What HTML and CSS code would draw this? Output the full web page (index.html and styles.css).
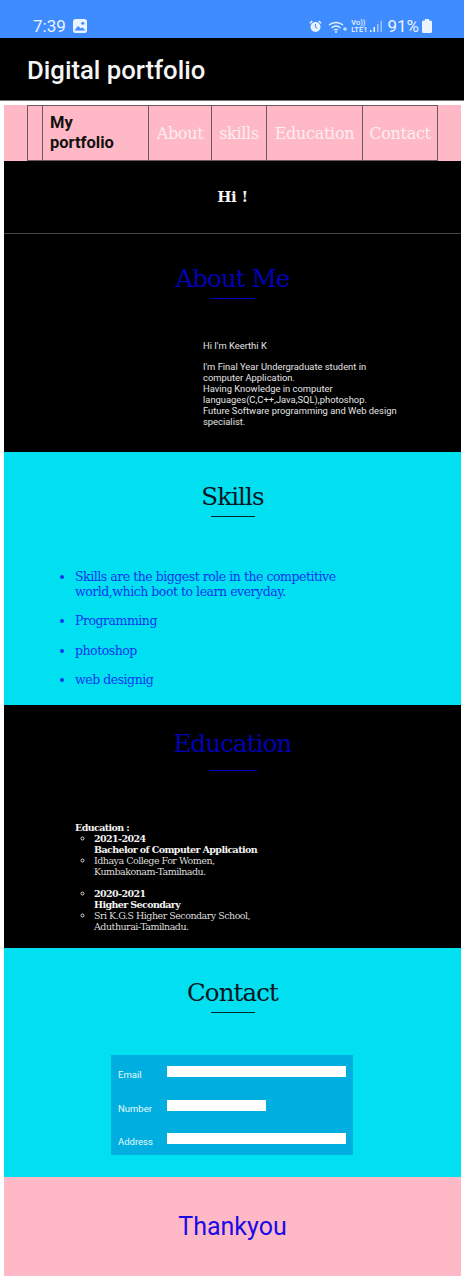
FILE: index.html
```html
<!DOCTYPE html>
<html lang="en">
<head>
    <meta charset="UTF-8">
    <meta name="viewport" content="width=device-width, initial-scale=1.0">
    <title>Digital portfolio</title>
    <link rel="stylesheet" href="styles.css">
</head>
<body>
    <div class="status">
        <span class="time">7:39</span>
        <svg class="pic" width="14" height="14" viewBox="0 0 14 14"><rect width="14" height="14" rx="2.5" fill="#eaf3ff"/><circle cx="9.8" cy="4.2" r="1.5" fill="#3f8cff"/><path d="M1.5 11.5l3.5-4.5 2.8 2.6 1.6-1.4 3 3.3z" fill="#3f8cff"/></svg>
        <span class="status-right">
            <svg width="13" height="13" viewBox="0 0 13 13"><path d="M1 3.2L3.2 1M12 3.2L9.8 1" stroke="#eaf3ff" stroke-width="1.6"/><circle cx="6.5" cy="7" r="5" fill="#eaf3ff"/><path d="M6.5 4v3.2l2 1" stroke="#3f8cff" fill="none"/></svg>
            <svg class="wifi" width="20" height="13" viewBox="0 0 20 13"><path d="M1 5a11 11 0 0 1 14 0M3.5 7.700a7.500 7.500 0 0 1 9 0M6 10a4 4 0 0 1 4 0" stroke="#eaf3ff" stroke-width="1.3" fill="none"/><circle cx="8" cy="12" r="1" fill="#eaf3ff"/><path d="M15 9h4M17 7v4" stroke="#eaf3ff"/></svg>
            <span class="volte">Vo))<br>LTE1</span>
            <svg class="bars" width="13" height="13" viewBox="0 0 13 13"><rect x="0" y="10" width="1.500" height="2" fill="#eaf3ff"/><rect x="3.500" y="7" width="1.500" height="5" fill="#eaf3ff"/><rect x="7" y="4" width="1.500" height="8" fill="#9cc3ff"/><rect x="10.500" y="1" width="1.500" height="11" fill="#9cc3ff"/></svg>
            <span class="pct">91%</span>
            <svg width="10" height="14" viewBox="0 0 10 14"><path d="M3 0h4v1.500h1.500a1.500 1.500 0 0 1 1.500 1.500v9.500a1.500 1.500 0 0 1-1.500 1.500h-7a1.500 1.500 0 0 1-1.500-1.500v-9.500a1.500 1.500 0 0 1 1.500-1.500h1.500z" fill="#eaf3ff"/></svg>
        </span>
    </div>
    <div class="appbar">Digital portfolio</div>

    <div class="page">
        <nav class="nav">
            <div class="menu">
                <div class="cell cell-blank"></div>
                <div class="cell cell-brand">My portfolio</div>
                <div class="cell cell-about">About</div>
                <div class="cell cell-skills">skills</div>
                <div class="cell cell-edu">Education</div>
                <div class="cell cell-contact">Contact</div>
            </div>
        </nav>

        <section class="hi">Hi !</section>

        <section class="about">
            <h2 class="title title-blue">About Me</h2>
            <div class="rule rule-blue"></div>
            <div class="about-text">
                <p>Hi I'm Keerthi K</p>
                <p>I'm Final Year Undergraduate student in computer Application.<br>
                Having Knowledge in computer languages(C,C++,Java,SQL),photoshop.<br>
                Future Software programming and Web design specialist.</p>
            </div>
        </section>

        <section class="skills">
            <h2 class="title">Skills</h2>
            <div class="rule"></div>
            <ul class="skill-list">
                <li>Skills are the biggest role in the competitive world,which boot to learn everyday.</li>
                <li>Programming</li>
                <li>photoshop</li>
                <li>web designig</li>
            </ul>
        </section>

        <section class="education">
            <h2 class="title title-blue">Education</h2>
            <div class="rule rule-blue rule-wide"></div>
            <div class="edu-text">
                <b>Education :</b>
                <ul>
                    <li><b>2021-2024<br>Bachelor of Computer Application</b></li>
                    <li>Idhaya College For Women,<br>Kumbakonam-Tamilnadu.</li>
                </ul>
                <ul class="edu-second">
                    <li><b>2020-2021<br>Higher Secondary</b></li>
                    <li>Sri K.G.S Higher Secondary School,<br>Aduthurai-Tamilnadu.</li>
                </ul>
            </div>
        </section>

        <section class="contact">
            <h2 class="title">Contact</h2>
            <div class="rule"></div>
            <form class="form">
                <div class="row"><label>Email</label><span class="field"></span></div>
                <div class="row"><label>Number</label><span class="field field-short"></span></div>
                <div class="row"><label>Address</label><span class="field"></span></div>
            </form>
        </section>

        <section class="thanks">Thankyou</section>
    </div>
</body>
</html>
```

FILE: styles.css
```css
body{
    margin:0;
    background:#fff;
    font-family:"Roboto",sans-serif;
}
.status{
    height:38px;
    background:#3f8cff;
    color:#eaf3ff;
    display:flex;
    align-items:center;
    padding:14px 32px 0 33px;
    box-sizing:border-box;
}
.time{
    font-size:17px;
    margin-right:7px;
}
.status-right{
    margin-left:auto;
    display:flex;
    align-items:center;
    gap:3px;
}
.wifi{
    margin-left:3px;
}
.volte{
    font-size:7.5px;
    line-height:7px;
    font-weight:500;
}
.pct{
    font-size:17px;
    margin-left:1px;
}
.appbar{
    height:62px;
    background:#000;
    color:#f5f5f5;
    font-size:25.7px;
    font-weight:500;
    line-height:65px;
    padding-left:27px;
    border-bottom:1px solid #777;
}
.page{
    margin:4px 3px 0 4px;
    font-family:"DejaVu Serif",serif;
}
.nav{
    height:56px;
    background:#ffb9c6;
    padding-left:23px;
}
.menu{
    display:flex;
    width:411px;
    height:56px;
    box-sizing:border-box;
    border:1px solid #6a5a5e;
}
.cell{
    border-right:1px solid #6a5a5e;
    box-sizing:border-box;
    color:#fdeef1;
    font-size:16px;
    letter-spacing:-0.3px;
    display:flex;
    align-items:center;
    justify-content:center;
}
.cell-blank{width:15px;}
.cell-brand{
    width:106px;
    color:#111;
    font-family:"Roboto",sans-serif;
    font-weight:700;
    font-size:16.5px;
    letter-spacing:0;
    line-height:20px;
    justify-content:flex-start;
    padding:0 30px 0 7px;
}
.cell-about{width:63px;}
.cell-skills{width:55px;}
.cell-edu{width:96px;}
.cell-contact{width:74px;border-right:0;}
.hi{
    height:73px;
    box-sizing:border-box;
    background:#000;
    color:#f5f5f5;
    font-weight:700;
    font-size:15px;
    letter-spacing:-0.3px;
    text-align:center;
    line-height:72px;
    border-bottom:1px solid #444;
}
.title{
    margin:0;
    font-weight:400;
    font-size:24.5px;
    letter-spacing:-0.9px;
    line-height:34px;
    text-align:center;
    color:#0a1520;
}
.title-blue{
    color:#0202b4;
}
.rule{
    width:44px;
    height:1px;
    margin:2px auto 0;
    background:#0a2530;
}
.rule-blue{
    background:#0000d0;
}
.rule-wide{
    width:48px;
    margin-top:9px;
}
.about{
    height:218px;
    box-sizing:border-box;
    background:#000;
    padding-top:28px;
}
.about-text{
    margin:41px 60px 0 199px;
    font-family:"Roboto",sans-serif;
    font-size:9.4px;
    line-height:11px;
    color:#e4e4e4;
}
.about-text p{
    margin:0 0 10px;
}
.skills{
    height:253px;
    box-sizing:border-box;
    background:#00e0f0;
    padding-top:28px;
}
.skill-list{
    margin:53px 100px 0 0;
    padding-left:71px;
    color:#0d36f0;
    font-size:12.5px;
    letter-spacing:-0.47px;
    line-height:14.5px;
}
.skill-list li{
    margin-bottom:15px;
}
.education{
    height:243px;
    box-sizing:border-box;
    background:#000;
    padding-top:22px;
}
.edu-text{
    margin:51px 0 0 71px;
    color:#dcdcdc;
    font-size:9.5px;
    letter-spacing:-0.5px;
    line-height:11px;
}
.edu-text b{
    color:#f4f4f4;
    letter-spacing:-0.6px;
}
.edu-text ul{
    margin:0;
    padding-left:19px;
    list-style:circle;
}
.edu-second{
    padding-top:11px;
}
.contact{
    height:229px;
    box-sizing:border-box;
    background:#00e0f0;
    padding-top:28px;
}
.form{
    width:242px;
    height:100px;
    margin:42px 0 0 107px;
    background:#00afe0;
    padding:11px 7px 0 7px;
    box-sizing:border-box;
}
.row{
    display:flex;
    height:33.5px;
}
.row label{
    width:49px;
    color:#e6f8ff;
    font-family:"Roboto",sans-serif;
    font-size:9.5px;
    line-height:11px;
    padding-top:3px;
}
.field{
    width:179px;
    height:11px;
    background:#fff;
}
.field-short{
    width:99px;
}
.thanks{
    height:99px;
    background:#ffb9c6;
    color:#1a0be6;
    font-family:"Roboto",sans-serif;
    font-size:25px;
    line-height:100px;
    text-align:center;
}
```
